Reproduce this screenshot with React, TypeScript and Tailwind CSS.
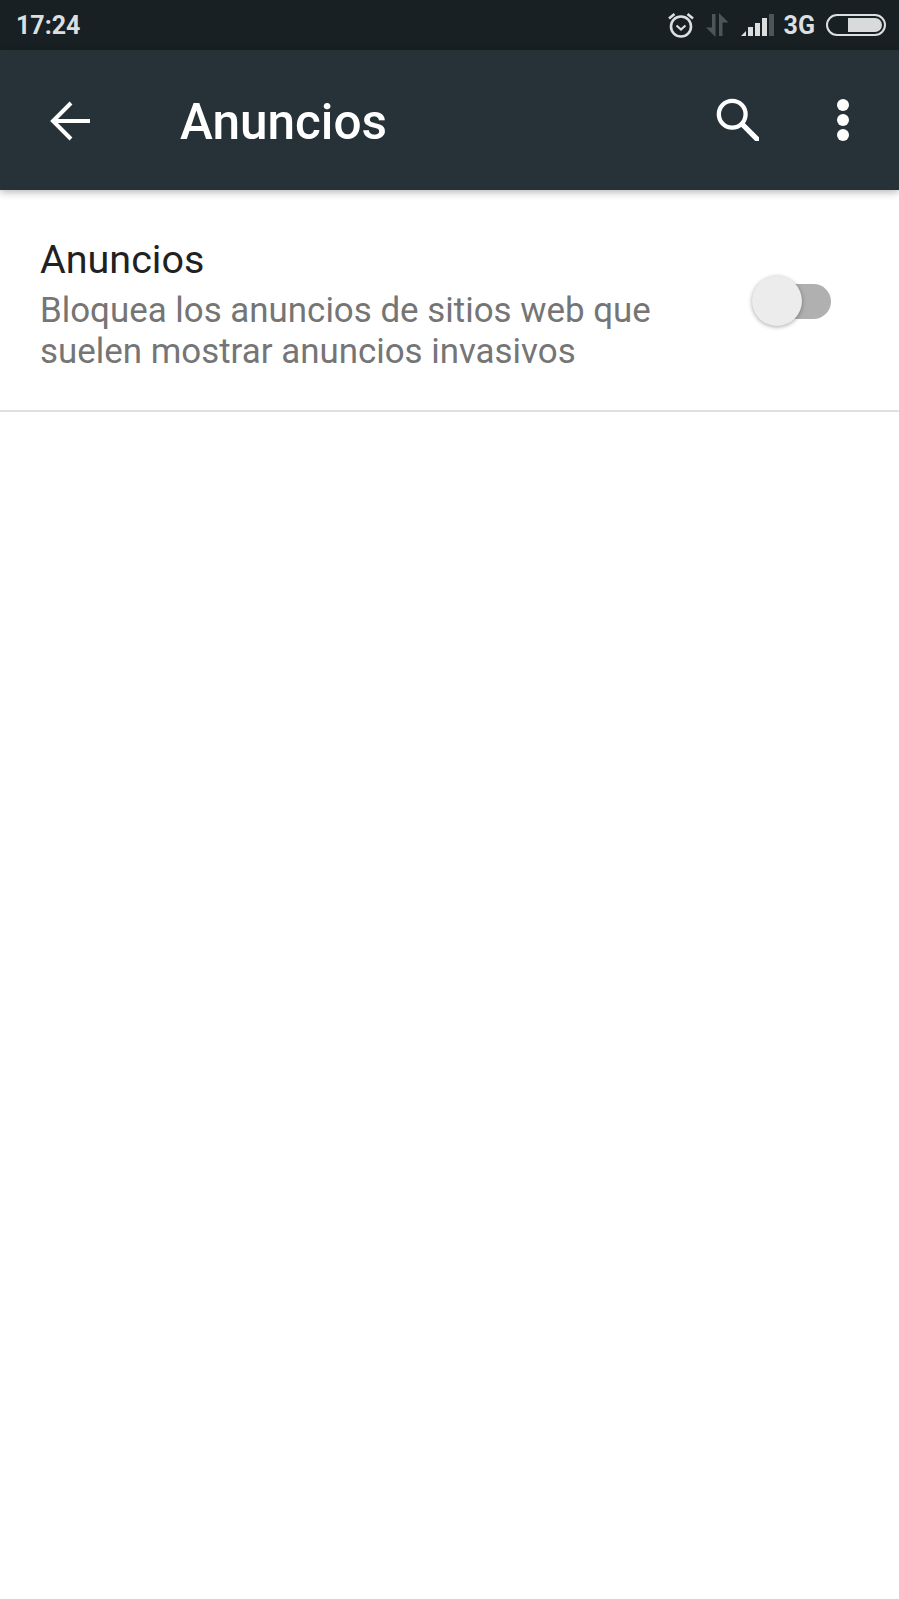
const roboto = 'font-["Roboto",sans-serif]';

function AlarmIcon() {
  return (
    <svg width="28" height="28" viewBox="0 0 28 28" fill="none" stroke="#dcdfe0" strokeWidth="2.6">
      <circle cx="14" cy="15.5" r="10" />
      <path d="M9.500 14.500l4.500 4 4.500-4" strokeWidth="2.200" />
      <path d="M2 7.500L7.500 3M26 7.500L20.500 3" strokeWidth="2.600" />
    </svg>
  );
}

function DataIcon() {
  return (
    <svg width="24" height="26" viewBox="0 0 24 26" fill="#4c5557">
      <path d="M7 2h3.500v23L1 15.500h6z" />
      <path d="M14 1l9.500 9.500H17.500V24H14z" />
    </svg>
  );
}

function SignalIcon() {
  return (
    <svg width="33" height="22" viewBox="0 0 33 22">
      <path d="M0 22l5-5v5z" fill="#dcdfe0" />
      <rect x="7" y="13" width="5" height="9" fill="#dcdfe0" />
      <rect x="14" y="9" width="5" height="13" fill="#dcdfe0" />
      <rect x="21" y="4" width="5" height="18" fill="#dcdfe0" />
      <rect x="28" y="0" width="5" height="22" fill="#4c5557" />
    </svg>
  );
}

function BatteryIcon() {
  return (
    <div className="w-[60px] h-[22px] rounded-full border-2 border-[#dcdfe0] p-[2px] flex justify-end">
      <div className="w-[34px] h-full rounded-r-full bg-[#d8dadc]" />
    </div>
  );
}

function Switch() {
  return (
    <div className="relative w-[79px] h-[50px] flex items-center justify-end">
      <div className="w-[66px] h-[35px] rounded-full bg-[#b0b0b0]" />
      <div className="absolute left-0 top-0 w-[50px] h-[50px] rounded-full bg-[#ececec] shadow-[0_1px_4px_rgba(0,0,0,0.35)]" />
    </div>
  );
}

export default function App() {
  return (
    <div className={`w-[899px] h-[1599px] bg-white flex flex-col ${roboto}`}>
      {/* Status bar */}
      <div className="h-[50px] bg-[#182023] flex items-center justify-between pl-4 pr-[13px]">
        <span className="text-[25px] font-bold text-[#dcdfe0] pt-[2px]">17:24</span>
        <div className="flex items-center">
          <AlarmIcon />
          <div className="ml-[10px]"><DataIcon /></div>
          <div className="ml-[12px]"><SignalIcon /></div>
          <span className="ml-[10px] text-[25px] font-bold text-[#dcdfe0] pt-[2px]">3G</span>
          <div className="ml-[11px]"><BatteryIcon /></div>
        </div>
      </div>

      {/* App bar */}
      <div className="h-[140px] bg-[#263238] flex items-center shadow-[0_2px_8px_rgba(0,0,0,0.3)] relative">
        <div className="w-[180px] pl-[50px] pt-[2px] shrink-0">
          <svg width="40" height="40" viewBox="0 0 40 40" fill="none" stroke="#fff" strokeWidth="4">
            <path d="M40 20H3M21 2L3 20l18 18" />
          </svg>
        </div>
        <span className="text-[49.5px] font-medium text-white flex-1 pt-[4px]">Anuncios</span>
        <svg className="mr-[78px] mb-[2px]" width="44" height="44" viewBox="0 0 46 46" fill="none" stroke="#fff" strokeLinecap="round">
          <circle cx="18" cy="18" r="14" strokeWidth="4.500" />
          <path d="M29 29l15 15" strokeWidth="5.500" />
        </svg>
        <div className="mr-[50px] flex flex-col gap-[3px]">
          <div className="w-[12px] h-[12px] rounded-full bg-white" />
          <div className="w-[12px] h-[12px] rounded-full bg-white" />
          <div className="w-[12px] h-[12px] rounded-full bg-white" />
        </div>
      </div>

      {/* Setting row */}
      <div className="h-[222px] border-b-2 border-[#e0e0e0] flex items-center pl-[40px] pr-[68px]">
        <div className="flex-1 pt-[8px]">
          <div className="text-[39.5px] leading-[46px] text-[#212121]">Anuncios</div>
          <div className="text-[34.9px] leading-[41px] text-[#757575] mt-[7px]">
            Bloquea los anuncios de sitios web que
            <br />
            suelen mostrar anuncios invasivos
          </div>
        </div>
        <div className="pt-[2px]"><Switch /></div>
      </div>
    </div>
  );
}
